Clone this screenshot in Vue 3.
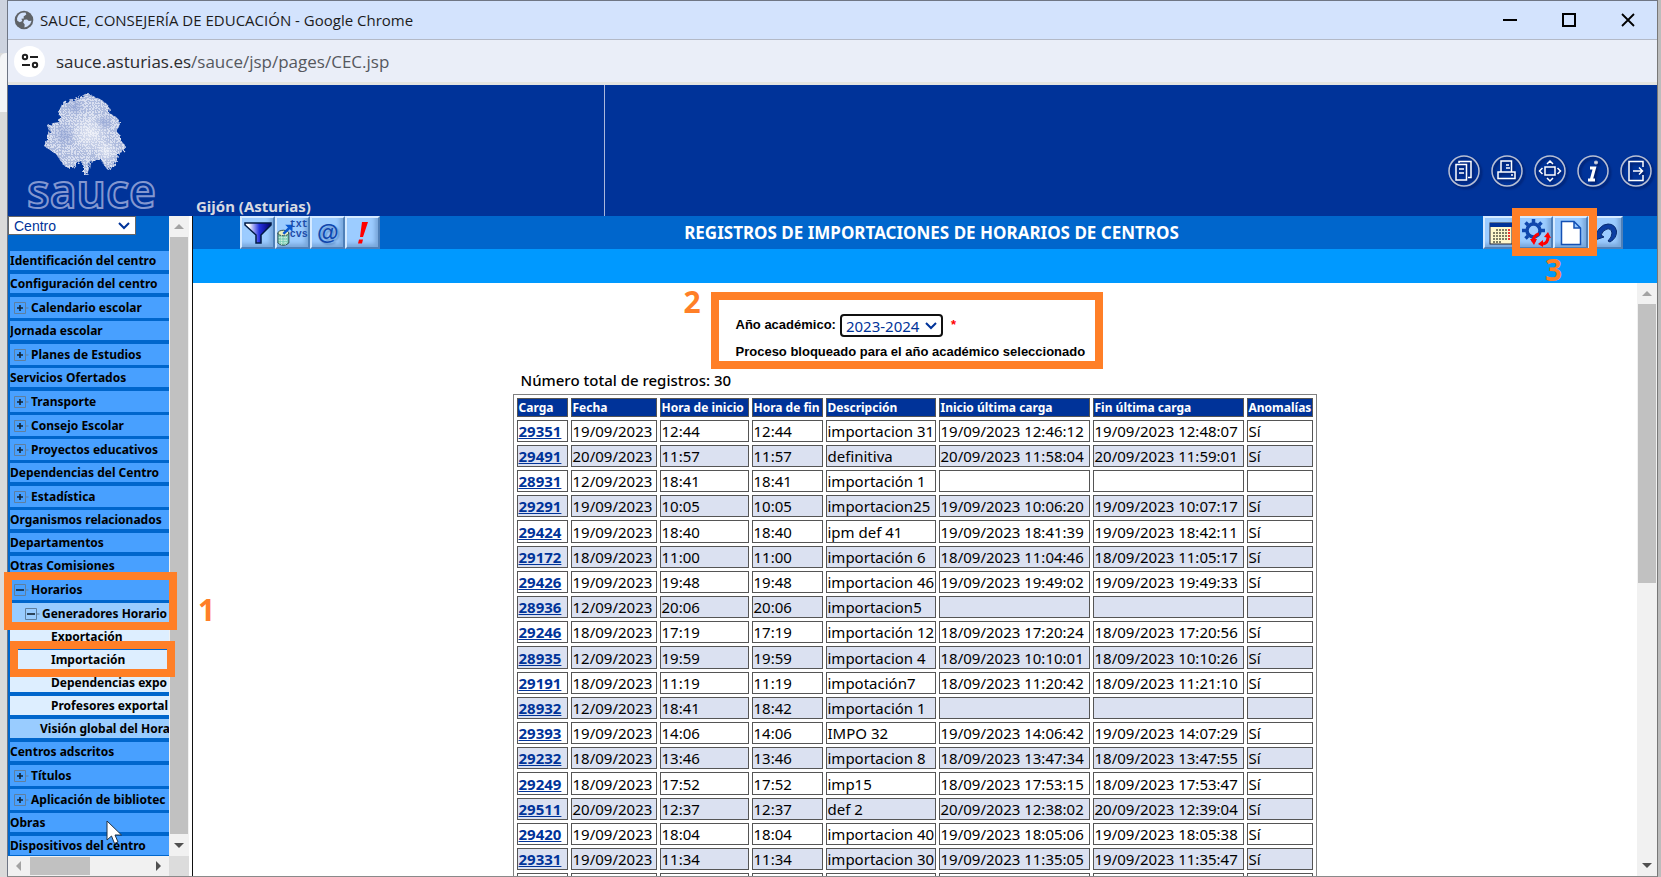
<script setup>
import { ref } from 'vue'

const menu = [
  { t: 'Identificación del centro' },
  { t: 'Configuración del centro' },
  { t: 'Calendario escolar', s: '+' },
  { t: 'Jornada escolar' },
  { t: 'Planes de Estudios', s: '+' },
  { t: 'Servicios Ofertados' },
  { t: 'Transporte', s: '+' },
  { t: 'Consejo Escolar', s: '+' },
  { t: 'Proyectos educativos', s: '+' },
  { t: 'Dependencias del Centro' },
  { t: 'Estadística', s: '+' },
  { t: 'Organismos relacionados' },
  { t: 'Departamentos' },
  { t: 'Otras Comisiones' },
  { t: 'Horarios', s: '-' },
  { t: 'Generadores Horario', s: '-', l: 2 },
  { t: 'Exportación', l: 3 },
  { t: 'Importación', l: 3 },
  { t: 'Dependencias expo', l: 3 },
  { t: 'Profesores exportal', l: 3 },
  { t: 'Visión global del Hora', l: 2 },
  { t: 'Centros adscritos' },
  { t: 'Títulos', s: '+' },
  { t: 'Aplicación de bibliotec', s: '+' },
  { t: 'Obras' },
  { t: 'Dispositivos del centro' },
]

const heads = ['Carga', 'Fecha', 'Hora de inicio', 'Hora de fin', 'Descripción', 'Inicio última carga', 'Fin última carga', 'Anomalías']

const rows = [
  ['29351', '19/09/2023', '12:44', '12:44', 'importacion 31', '19/09/2023 12:46:12', '19/09/2023 12:48:07', 'Sí'],
  ['29491', '20/09/2023', '11:57', '11:57', 'definitiva', '20/09/2023 11:58:04', '20/09/2023 11:59:01', 'Sí'],
  ['28931', '12/09/2023', '18:41', '18:41', 'importación 1', '', '', ''],
  ['29291', '19/09/2023', '10:05', '10:05', 'importacion25', '19/09/2023 10:06:20', '19/09/2023 10:07:17', 'Sí'],
  ['29424', '19/09/2023', '18:40', '18:40', 'ipm def 41', '19/09/2023 18:41:39', '19/09/2023 18:42:11', 'Sí'],
  ['29172', '18/09/2023', '11:00', '11:00', 'importación 6', '18/09/2023 11:04:46', '18/09/2023 11:05:17', 'Sí'],
  ['29426', '19/09/2023', '19:48', '19:48', 'importacion 46', '19/09/2023 19:49:02', '19/09/2023 19:49:33', 'Sí'],
  ['28936', '12/09/2023', '20:06', '20:06', 'importacion5', '', '', ''],
  ['29246', '18/09/2023', '17:19', '17:19', 'importación 12', '18/09/2023 17:20:24', '18/09/2023 17:20:56', 'Sí'],
  ['28935', '12/09/2023', '19:59', '19:59', 'importacion 4', '18/09/2023 10:10:01', '18/09/2023 10:10:26', 'Sí'],
  ['29191', '18/09/2023', '11:19', '11:19', 'impotación7', '18/09/2023 11:20:42', '18/09/2023 11:21:10', 'Sí'],
  ['28932', '12/09/2023', '18:41', '18:42', 'importación 1', '', '', ''],
  ['29393', '19/09/2023', '14:06', '14:06', 'IMPO 32', '19/09/2023 14:06:42', '19/09/2023 14:07:29', 'Sí'],
  ['29232', '18/09/2023', '13:46', '13:46', 'importacion 8', '18/09/2023 13:47:34', '18/09/2023 13:47:55', 'Sí'],
  ['29249', '18/09/2023', '17:52', '17:52', 'imp15', '18/09/2023 17:53:15', '18/09/2023 17:53:47', 'Sí'],
  ['29511', '20/09/2023', '12:37', '12:37', 'def 2', '20/09/2023 12:38:02', '20/09/2023 12:39:04', 'Sí'],
  ['29420', '19/09/2023', '18:04', '18:04', 'importacion 40', '19/09/2023 18:05:06', '19/09/2023 18:05:38', 'Sí'],
  ['29331', '19/09/2023', '11:34', '11:34', 'importacion 30', '19/09/2023 11:35:05', '19/09/2023 11:35:47', 'Sí'],
  ['', '', '', '', '', '', '', ''],
]

const profile = ref('Centro')
const year = ref('2023-2024')
</script>

<template>
  <div class="desktop">
    <div class="edge-left"><i></i><b></b></div>
    <div class="window">
      <header class="titlebar">
        <svg class="globe" width="20" height="20" viewBox="0 0 20 20">
          <circle cx="10" cy="10" r="9.3" fill="#5f6368" />
          <path d="M3 8.5Q4 4 8 2.8L11.5 2.4 12.3 4.6 9.6 6.4 9.8 8.4 7.4 8.8 8.3 11 5.8 12.2 3.3 10.8ZM10.2 9.8 13 9.4 14.8 11 17.6 10.8Q16.8 14.6 13.4 16.6L10.4 17.4 10.7 14.4 9.2 12.6Z" fill="#d3e3fd" />
        </svg>
        <span class="win-title">SAUCE, CONSEJERÍA DE EDUCACIÓN - Google Chrome</span>
        <div class="win-buttons">
          <button aria-label="Minimizar"><svg width="14" height="14"><path d="M0 7H14" stroke="#000" stroke-width="2" /></svg></button>
          <button aria-label="Maximizar"><svg width="14" height="14"><rect x="1" y="1" width="12" height="12" fill="none" stroke="#000" stroke-width="2" /></svg></button>
          <button aria-label="Cerrar"><svg width="14" height="14"><path d="M1 1 13 13M13 1 1 13" stroke="#000" stroke-width="1.8" /></svg></button>
        </div>
      </header>
      <div class="address">
        <button class="site" aria-label="Información del sitio">
          <svg width="18" height="16" viewBox="0 0 18 16" fill="none" stroke="#1f1f1f" stroke-width="2">
            <circle cx="4" cy="4" r="2.2" /><path d="M9 4H17M1 12H9" /><circle cx="14" cy="12" r="2.2" />
          </svg>
        </button>
        <span class="url">sauce.asturias.es<em>/sauce/jsp/pages/CEC.jsp</em></span>
      </div>

      <div class="banner">
        <div class="brand">
          <div class="logo">
            <svg width="82" height="82" viewBox="0 0 82 82">
              <defs>
                <pattern id="dots" width="3" height="3" patternUnits="userSpaceOnUse">
                  <rect width="3" height="3" fill="#aebbdd" /><rect width="2" height="2" fill="#d9dff0" />
                </pattern>
                <radialGradient id="shine"><stop offset="0" stop-color="#fff" stop-opacity=".6" /><stop offset="1" stop-color="#fff" stop-opacity="0" /></radialGradient>
                <radialGradient id="shade"><stop offset="0" stop-color="#7d92cc" stop-opacity=".5" /><stop offset="1" stop-color="#7d92cc" stop-opacity="0" /></radialGradient>
                <filter id="rough" x="-5%" y="-5%" width="110%" height="110%"><feTurbulence type="fractalNoise" baseFrequency=".35" numOctaves="2" seed="4" /><feDisplacementMap in="SourceGraphic" scale="5" /></filter>
              </defs>
              <g filter="url(#rough)">
                <path d="M36 4 43 0 49 3 56 6 63 11 66 16 65 20 71 23 76 28 75 34 72 38 77 43 77 48 82 53 80 58 74 61 73 67 70 74 64 77 60 72 57 66 51 66 48 70 46 68 45 76 43 82 40 82 40 74 37 68 32 71 29 75 24 75 19 72 16 67 12 61 6 57 0 53 3 47 3 42 6 39 4 33 9 30 15 29 16 24 15 18 18 11 24 8 29 7Z" fill="url(#dots)" />
                <circle cx="46" cy="40" r="22" fill="url(#shine)" /><circle cx="20" cy="42" r="13" fill="url(#shade)" />
                <circle cx="60" cy="29" r="9" fill="url(#shade)" /><circle cx="31" cy="14" r="10" fill="url(#shade)" /><circle cx="62" cy="58" r="12" fill="url(#shine)" />
              </g>
            </svg>
            <span class="wordmark">sauce</span>
          </div>
          <span class="place">Gijón (Asturias)</span>
        </div>
        <nav class="round">
          <a href="#" aria-label="Copiar"><svg viewBox="0 0 32 32"><circle cx="16" cy="16" r="15" /><path d="M11 8V6.500H23V22.500H20M8 9.500H18.500V25H8ZM11 14H16M11 18H16" /></svg></a>
          <a href="#" aria-label="Imprimir"><svg viewBox="0 0 32 32"><circle cx="16" cy="16" r="15" /><path d="M10 17V6H20.500V17M7 17H24V23.500H7ZM20 20H22M15 10H18M15 13H19" /></svg></a>
          <a href="#" aria-label="Pantalla"><svg viewBox="0 0 32 32"><circle cx="16" cy="16" r="15" /><path d="M11 12H21V20H11ZM13 9 16 6 19 9M13 23 16 26 19 23M8.500 13 5.500 16 8.500 19M23.500 13 26.500 16 23.500 19" /></svg></a>
          <a href="#" aria-label="Información"><svg viewBox="0 0 32 32"><circle cx="16" cy="16" r="15" /><path d="M13 13H17.500L14.500 24M11 25H18" stroke-width="3" /><circle cx="19" cy="7.500" r="1.300" fill="#fff" /></svg></a>
          <a href="#" aria-label="Salir"><svg viewBox="0 0 32 32"><circle cx="16" cy="16" r="15" /><path d="M23 12V6.500H9V25.500H23V20M13 16H22M19 12.500 22.500 16 19 19.500" /></svg></a>
        </nav>
      </div>

      <div class="body">
        <aside class="side">
          <div class="side-page">
            <div class="profile">
              <select v-model="profile" aria-label="Perfil"><option>Centro</option></select>
              <svg width="12" height="8" viewBox="0 0 12 8"><path d="M1 1 6 6 11 1" fill="none" stroke="#039" stroke-width="2" /></svg>
            </div>
            <ul class="menu">
              <li v-for="m in menu" :key="m.t" :class="['lv' + (m.l || 1), { fold: m.s }]">
                <button v-if="m.s" class="toggle" :aria-label="m.t">
                  <svg width="15" height="12" viewBox="0 0 15 12">
                    <path d="M.5 .5H11.500V11.500H.5ZM12 6H14.500" fill="none" stroke="#5f7f9f" />
                    <path :d="m.s === '+' ? 'M3 6H9M6 3V9' : 'M2 6H10'" stroke="#123" stroke-width="1.600" />
                  </svg>
                </button>
                <a href="#">{{ m.t }}</a>
              </li>
            </ul>
          </div>
          <div class="vbar">
            <svg width="10" height="5"><path d="M0 5 5 0 10 5Z" fill="#a3a3a3" /></svg>
            <i></i>
            <svg width="10" height="5"><path d="M0 0 5 5 10 0Z" fill="#505050" /></svg>
          </div>
          <div class="hbar">
            <svg width="5" height="10"><path d="M5 0 0 5 5 10Z" fill="#a3a3a3" /></svg>
            <i></i>
            <svg width="5" height="10"><path d="M0 0 5 5 0 10Z" fill="#505050" /></svg>
          </div>
          <div class="corner"></div>
          <div class="mark mark-group"></div>
          <div class="mark mark-item"></div>
          <strong class="num num1">1</strong>
          <svg class="cursor" width="17" height="25" viewBox="0 0 17 25"><path d="M1 1V20L5.500 16 8.500 23.500 12 22 9 15H15.500Z" fill="#fff" stroke="#234" /></svg>
        </aside>

        <main class="content">
          <div class="toolbar">
            <div class="tools">
              <button aria-label="Filtrar">
                <svg width="28" height="24" viewBox="0 0 28 24">
                  <defs><linearGradient id="fun"><stop offset=".15" stop-color="#fff" /><stop offset=".55" stop-color="#2430e0" /><stop offset="1" stop-color="#00006a" /></linearGradient></defs>
                  <path d="M1 2H27V4L17 14V22H12V14L1 4Z" fill="url(#fun)" stroke="#001a44" stroke-width="1.500" />
                </svg>
              </button>
              <button aria-label="Exportar">
                <svg width="34" height="32" viewBox="0 0 34 32">
                  <path d="M1 16V27Q7 32 13 27V16" fill="#7fd0b8" stroke="#244" /><ellipse cx="7" cy="16" rx="6" ry="3" fill="#e8f0c0" stroke="#244" />
                  <path d="M2 21H12M2 24H12M2 27H12M5 18V29M9 18V29" stroke="#e8f6e8" stroke-dasharray="1 1" />
                  <path d="M6 16 12 10 9 7H17V15L14 12 8 18Z" fill="#0a58d0" />
                  <g font-family="Liberation Mono, monospace" font-size="11" font-weight="700" fill="#1c4ba8"><text x="14" y="9">txt</text><text x="14" y="20">cvs</text></g>
                </svg>
              </button>
              <button aria-label="Correo"><span class="at">@</span></button>
              <button aria-label="Avisos">
                <svg width="14" height="24" viewBox="0 0 14 24"><path d="M6 1H12L7 16H4ZM3 18.500H7L6 22.500H2Z" fill="#f00" /></svg>
              </button>
            </div>
            <h1>REGISTROS DE IMPORTACIONES DE HORARIOS DE CENTROS</h1>
            <div class="tools right">
              <button aria-label="Calendario">
                <svg width="24" height="24" viewBox="0 0 24 24">
                  <rect x="1" y="2" width="22" height="21" fill="#fff8cc" stroke="#223" /><rect x="1" y="2" width="22" height="4" fill="#039" />
                  <path d="M7 9H18M4 12H18M4 15H18M4 18H18M4 21H13" stroke="#554" stroke-width="1.500" stroke-dasharray="2 1" /><path d="M20 8V19" stroke="#e33" stroke-width="2" stroke-dasharray="2 1" />
                </svg>
              </button>
              <button aria-label="Procesar">
                <svg width="30" height="30" viewBox="0 0 30 30">
                  <circle cx="12.500" cy="12.500" r="6.500" fill="none" stroke="#0f47ad" stroke-width="3.500" />
                  <path d="M12.500 5V1M12.500 20V24M5 12.500H1M20 12.500H24M7 7 4.500 4.500M18 7 20.500 4.500M7 18 4.500 20.500" stroke="#0f47ad" stroke-width="3.500" />
                  <path d="M12 23Q13 17 18 16M22 26Q27 25 27 19" fill="none" stroke="#f00" stroke-width="3" />
                  <path d="M9 21H16L13 27ZM23 19 27 14 30 20ZM22 22V29L17 26Z" fill="#f00" />
                </svg>
              </button>
              <button aria-label="Nuevo">
                <svg width="22" height="26" viewBox="0 0 22 26"><path d="M1.500 1.500H14L20.500 8V24.500H1.500ZM14 1.500V8H20.500" fill="#fff" stroke="#1450b4" stroke-width="1.500" /></svg>
              </button>
              <button aria-label="Volver">
                <svg width="26" height="22" viewBox="0 0 26 22"><path d="M0 14Q4 11 6 7 10 2 15 2 22 2 23.500 9 24 16 17 20L15 19Q19 15 19 11 18 6 14 7 10 8 8 13L11 15 2 18Z" fill="#0c3ea2" stroke="#062a70" /></svg>
              </button>
              <div class="mark mark-tools"></div>
              <strong class="num num3">3</strong>
            </div>
          </div>
          <div class="strip"></div>
          <div class="frame">
            <div class="page">
              <form class="filter" @submit.prevent>
                <div class="line">
                  <label for="year">Año académico:</label>
                  <span class="year">
                    <select id="year" v-model="year"><option>2023-2024</option></select>
                    <svg width="12" height="8" viewBox="0 0 12 8"><path d="M1 1 6 6 11 1" fill="none" stroke="#039" stroke-width="2" /></svg>
                  </span>
                  <span class="req">*</span>
                </div>
                <p>Proceso bloqueado para el año académico seleccionado</p>
                <strong class="num num2">2</strong>
              </form>
              <div class="list">
                <p class="total">Número total de registros: 30</p>
                <table>
                  <colgroup><col class="c1" /><col class="c2" /><col class="c3" /><col class="c4" /><col class="c5" /><col class="c6" /><col class="c6" /><col class="c8" /></colgroup>
                  <thead><tr><th v-for="h in heads" :key="h">{{ h }}</th></tr></thead>
                  <tbody>
                    <tr v-for="(r, i) in rows" :key="i">
                      <td v-for="(c, j) in r" :key="j"><a v-if="j === 0 && c" href="#">{{ c }}</a><template v-else>{{ c }}</template></td>
                    </tr>
                  </tbody>
                </table>
              </div>
            </div>
            <div class="vbar page-bar">
              <svg width="10" height="5"><path d="M0 5 5 0 10 5Z" fill="#a3a3a3" /></svg>
              <i></i>
              <svg width="10" height="5"><path d="M0 0 5 5 10 0Z" fill="#505050" /></svg>
            </div>
          </div>
        </main>
      </div>
    </div>
    <div class="edge-right"></div>
  </div>
</template>

<style>
body { margin: 0; }
</style>

<style scoped>
* { box-sizing: border-box; }
button { border: 0; padding: 0; background: none; display: flex; align-items: center; justify-content: center; }
select { appearance: none; margin: 0; }
p, h1, ul { margin: 0; padding: 0; }
a { color: inherit; text-decoration: none; }

.desktop { display: flex; height: 100vh; overflow: hidden; font-family: "Noto Sans", "Open Sans", sans-serif; color: #000; }
.edge-left { width: 7px; flex: none; display: flex; flex-direction: column; background: #dadada; }
.edge-left i { height: 53px; background: #cdd3df; }
.edge-left b { height: 59px; background: #f4f5f7; border-top-left-radius: 6px; }
.edge-right { width: 3px; flex: none; background: #bcbcbc; }
.window { flex: 1; min-width: 0; display: flex; flex-direction: column; border: 1px solid #6f7684; border-right-color: #777; border-bottom-color: #8a8a8a; background: #fff; }

.titlebar { height: 39px; flex: none; display: flex; align-items: center; padding: 0 22px 0 6px; background: #d3e3fd; border-bottom: 1px solid #b3b9c6; }
.win-title { margin-left: 6px; font: 15px "Open Sans", sans-serif; color: #1c1c1c; }
.win-buttons { margin-left: auto; display: flex; gap: 45px; }
.address { height: 45px; flex: none; display: flex; align-items: center; padding: 0 0 0 6px; background: #eaeef8; border-bottom: 3px solid #e4e4e0; }
.site { width: 31px; height: 31px; border-radius: 50%; background: #fff; }
.url { margin-left: 11px; font: 17px "Open Sans", sans-serif; color: #2b2b2e; }
.url em { font-style: normal; color: #55585e; }

.banner { height: 131px; flex: none; display: flex; justify-content: space-between; background: #039; }
.brand { width: 597px; display: flex; border-right: 1px solid #a9b7dc; }
.logo { width: 188px; padding: 8px 0 0 19px; display: flex; flex-direction: column; }
.logo svg { margin-left: 17px; flex: none; }
.wordmark { font-size: 46px; font-weight: 600; line-height: 30px; color: #039; -webkit-text-stroke: 2px #8397d0; }
.place { align-self: flex-end; padding-bottom: 2px; font-size: 15px; line-height: 16px; font-weight: 700; color: #d8dae2; }
.round { display: flex; align-items: center; gap: 11px; padding: 40px 5px 0 0; }
.round svg { display: block; width: 32px; height: 32px; fill: none; stroke: #fff; stroke-width: 1.500; filter: drop-shadow(2px 2px 1px #001c66); }
.round circle { stroke: #b9c0d4; }

.body { flex: 1; min-height: 0; display: flex; }
.side { position: relative; width: 185px; flex: none; display: grid; grid-template: minmax(0, 1fr) 20px / 161px 20px; background: #fff; border-right: 1px solid #111; }
.side-page { background: #06c; overflow: hidden; padding-left: 2px; }
.profile { position: relative; margin-left: -2px; width: 128px; height: 19px; }
.profile select { display: block; width: 100%; height: 19px; padding: 0 5px; border: 1px solid #666; border-radius: 0; background: #fff; color: #039; font: 14px "Liberation Sans", sans-serif; }
.profile svg, .year svg { position: absolute; right: 6px; top: 6px; pointer-events: none; }
.menu { margin-top: 16px; list-style: none; font-size: 12px; font-weight: 700; line-height: 19px; white-space: nowrap; }
.menu li { height: 19px; margin-bottom: 4px; background: #48a0ff; display: flex; align-items: center; overflow: hidden; }
.menu li.fold { height: 21px; margin-bottom: 3px; padding-left: 4px; }
.menu li.lv2 { background: #9cf; padding-left: 30px; }
.menu li.lv2.fold { padding-left: 15px; }
.menu li.lv3 { background: #def; padding-left: 41px; }
.toggle { width: 15px; margin-right: 2px; flex: none; }

.vbar { display: flex; flex-direction: column; align-items: center; background: #f1f1f1; padding: 8px 0; }
.vbar i { width: 18px; flex: 1; margin: 8px 0 9px; background: #c1c1c1; }
.hbar { display: flex; align-items: center; padding: 0 8px; background: #f1f1f1; }
.hbar i { width: 60px; height: 18px; margin: 0 auto 0 9px; background: #c1c1c1; }
.corner { background: #dcdcdc; }

.content { flex: 1; min-width: 0; display: flex; flex-direction: column; }
.toolbar { height: 33px; flex: none; display: flex; align-items: center; justify-content: space-between; padding: 0 34px 0 47px; background: #06c; }
.toolbar h1 { font-size: 17px; line-height: 24px; font-weight: 700; color: #fff; font-family: "Noto Sans", sans-serif; }
.tools { position: relative; display: flex; height: 33px; }
.tools button { width: 35px; height: 33px; background: #9cccff; border: 2px solid; border-color: #d5eaff #4f80b8 #4f80b8 #d5eaff; box-shadow: inset -3px -3px 4px #78a6da; }
.at { font: 700 22px "Liberation Sans", sans-serif; font-style: italic; color: #0f47ad; text-shadow: 2px 2px 2px #5f8fc8; }
.strip { height: 34px; flex: none; background: #09f; }
.frame { flex: 1; min-height: 0; display: flex; }
.page { flex: 1; min-width: 0; overflow: hidden; display: flex; flex-direction: column; align-items: center; }
.page-bar { width: 20px; flex: none; }
.page-bar i { flex: none; height: 279px; margin-bottom: auto; }

.filter { position: relative; width: 392px; height: 77px; flex: none; margin: 9px 17px 0 0; padding: 12px 0 0 17px; border: 8px solid #ff7f27; font: 700 13px/20px "Liberation Sans", sans-serif; }
.line { display: flex; align-items: center; height: 26px; }
.filter p { padding-top: 4px; }
.year { position: relative; margin: 0 8px 0 4px; }
.year select { display: block; width: 103px; height: 23px; padding: 0 4px; border: 2px solid #101010; border-radius: 4px; background: #fff; color: #039; font: 15px "Noto Sans", sans-serif; }
.year svg { top: 8px; }
.req { color: #f00; }
.list { width: 803px; margin-right: 2px; }
.total { margin: 1px 0 4px 8px; font-size: 15px; line-height: 20px; font-weight: 500; }
table { width: 803px; table-layout: fixed; border: 1px solid #808080; border-spacing: 3px; font-size: 15px; }
th, td { padding: 0 0 0 1px; border: 1px solid #555; white-space: nowrap; overflow: hidden; text-align: left; line-height: 18px; }
th { height: 19px; background: #039; color: #fff; font-size: 12px; line-height: 16px; }
td { height: 22px; }
tbody tr:nth-child(even) td { background: #dbe1f1; }
tbody tr:nth-child(5n) td { height: 23px; }
td a { color: #039; font-weight: 700; text-decoration: underline; }
.c1 { width: 51px; } .c2 { width: 86px; } .c3 { width: 89px; } .c4 { width: 71px; } .c5 { width: 110px; } .c6 { width: 151px; } .c8 { width: 66px; }

.mark { position: absolute; border: 8px solid #ff7f27; pointer-events: none; }
.mark-group { left: -4px; top: 356px; width: 173px; height: 58px; }
.mark-item { left: 2px; top: 425px; width: 165px; height: 36px; }
.mark-tools { left: 29px; top: -8px; width: 85px; height: 48px; }
.num { position: absolute; color: #ff7f27; font: 700 30px/30px "Open Sans", sans-serif; }
.num1 { left: 190px; top: 379px; }
.num2 { left: -35px; top: -13px; }
.num3 { left: 62px; top: 39px; }
.cursor { position: absolute; left: 98px; top: 604px; }
</style>
